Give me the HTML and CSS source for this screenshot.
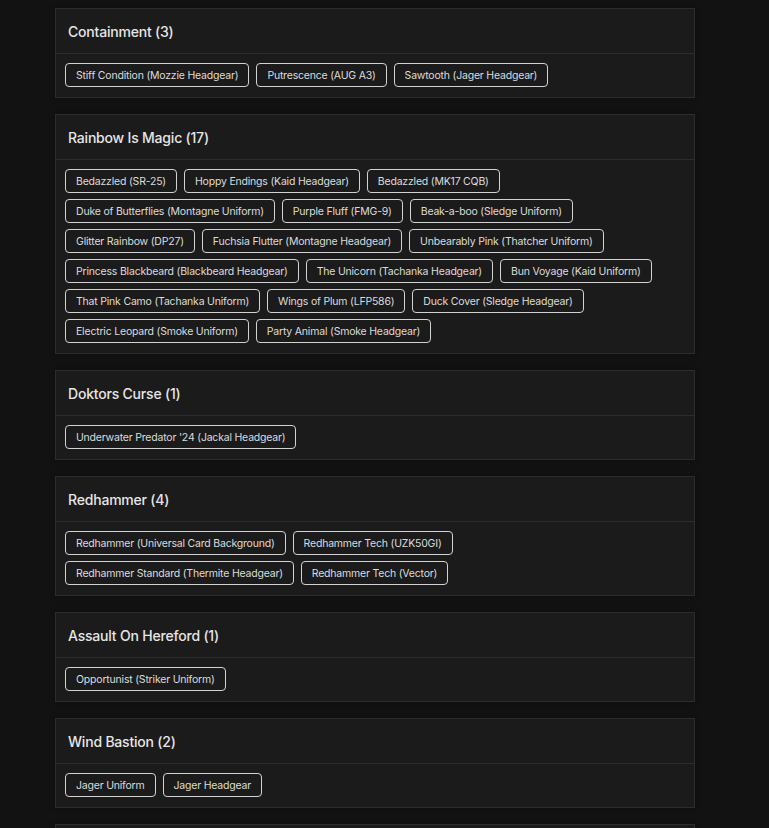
FILE: index.html
```html
<!DOCTYPE html>
<html lang="en">
<head>
<meta charset="utf-8">
<title>Events</title>
<link rel="stylesheet" href="styles.css">
</head>
<body>
<main class="wrap">
  <section class="card">
    <h2 class="card-title">Containment (3)</h2>
    <div class="card-body">
      <span class="chip">Stiff Condition (Mozzie Headgear)</span>
      <span class="chip">Putrescence (AUG A3)</span>
      <span class="chip">Sawtooth (Jager Headgear)</span>
    </div>
  </section>
  <section class="card">
    <h2 class="card-title">Rainbow Is Magic (17)</h2>
    <div class="card-body">
      <span class="chip">Bedazzled (SR-25)</span>
      <span class="chip">Hoppy Endings (Kaid Headgear)</span>
      <span class="chip">Bedazzled (MK17 CQB)</span>
      <span class="chip">Duke of Butterflies (Montagne Uniform)</span>
      <span class="chip">Purple Fluff (FMG-9)</span>
      <span class="chip">Beak-a-boo (Sledge Uniform)</span>
      <span class="chip">Glitter Rainbow (DP27)</span>
      <span class="chip">Fuchsia Flutter (Montagne Headgear)</span>
      <span class="chip">Unbearably Pink (Thatcher Uniform)</span>
      <span class="chip">Princess Blackbeard (Blackbeard Headgear)</span>
      <span class="chip">The Unicorn (Tachanka Headgear)</span>
      <span class="chip">Bun Voyage (Kaid Uniform)</span>
      <span class="chip">That Pink Camo (Tachanka Uniform)</span>
      <span class="chip">Wings of Plum (LFP586)</span>
      <span class="chip">Duck Cover (Sledge Headgear)</span>
      <span class="chip">Electric Leopard (Smoke Uniform)</span>
      <span class="chip">Party Animal (Smoke Headgear)</span>
    </div>
  </section>
  <section class="card">
    <h2 class="card-title">Doktors Curse (1)</h2>
    <div class="card-body">
      <span class="chip">Underwater Predator '24 (Jackal Headgear)</span>
    </div>
  </section>
  <section class="card">
    <h2 class="card-title">Redhammer (4)</h2>
    <div class="card-body">
      <span class="chip">Redhammer (Universal Card Background)</span>
      <span class="chip">Redhammer Tech (UZK50GI)</span>
      <span class="chip">Redhammer Standard (Thermite Headgear)</span>
      <span class="chip">Redhammer Tech (Vector)</span>
    </div>
  </section>
  <section class="card">
    <h2 class="card-title">Assault On Hereford (1)</h2>
    <div class="card-body">
      <span class="chip">Opportunist (Striker Uniform)</span>
    </div>
  </section>
  <section class="card">
    <h2 class="card-title">Wind Bastion (2)</h2>
    <div class="card-body">
      <span class="chip">Jager Uniform</span>
      <span class="chip">Jager Headgear</span>
    </div>
  </section>
  <section class="card card-next">
    <div class="card-title"></div>
  </section>
</main>
</body>
</html>
```
FILE: styles.css
```css
html, body {
  margin: 0;
  padding: 0;
  background: #121212;
  font-family: Inter, "Open Sans", sans-serif;
  color: #e4e4e4;
}

.wrap {
  width: 640px;
  margin-left: 55px;
  padding-top: 8px;
  padding-bottom: 16px;
  display: flex;
  flex-direction: column;
  gap: 16px;
}

.card {
  background: #1b1b1b;
  border: 1px solid #2c2c2c;
  box-shadow: 0 0 6px rgba(0, 0, 0, 0.35);
}

.card-title {
  margin: 0;
  height: 45px;
  box-sizing: border-box;
  padding: 0 12px;
  display: flex;
  align-items: center;
  font-size: 14px;
  font-weight: 500;
  letter-spacing: -0.2px;
  color: #e6e6e6;
  border-bottom: 1px solid #2c2c2c;
}

.card-body {
  padding: 9px 9px 10px;
  display: flex;
  flex-wrap: wrap;
  gap: 6px 7px;
}

.chip {
  height: 24px;
  box-sizing: border-box;
  display: inline-flex;
  align-items: center;
  padding: 0 10px;
  border: 1px solid #d2d2d2;
  border-radius: 4px;
  font-size: 10.5px;
  letter-spacing: -0.2px;
  color: #dcdcdc;
  white-space: nowrap;
}
```
